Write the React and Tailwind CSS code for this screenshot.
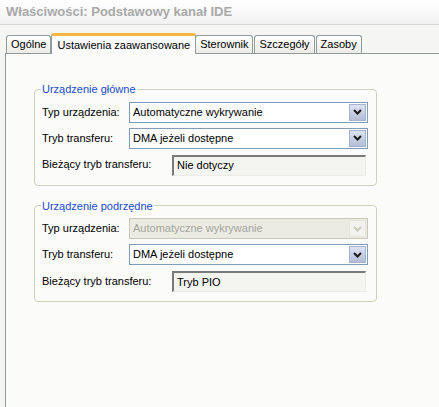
import React from 'react';

const font = { fontFamily: '"Liberation Sans", Arial, sans-serif' };

function Chevron({ disabled }) {
  return (
    <svg width="9" height="6" viewBox="0 0 9 6">
      <path
        d="M1 1 L4.5 4.5 L8 1"
        fill="none"
        stroke={disabled ? '#c9c9c0' : '#1a1a1a'}
        strokeWidth="2"
      />
    </svg>
  );
}

function Select({ value, disabled }) {
  return (
    <div
      className={
        'flex items-center h-[21px] w-[239px] shrink-0 border ' +
        (disabled ? 'border-[#c9c7ba] bg-[#ebebe4] text-[#a5a59d]' : 'border-[#7f9db9] bg-white text-black')
      }
    >
      <span className="flex-1 pl-[3px] leading-none">{value}</span>
      <div
        className={
          'w-[17px] h-[17px] mr-[1px] flex items-center justify-center border ' +
          (disabled
            ? 'border-[#e4e4dc] bg-[#f2f2ee]'
            : 'border-[#a6b3cf] bg-gradient-to-b from-[#dde3f2] to-[#b4bdd6]')
        }
      >
        <Chevron disabled={disabled} />
      </div>
    </div>
  );
}

function ReadOnly({ value }) {
  return (
    <div className="flex items-center h-[21px] w-[194px] mr-[2px] mt-[1px] shrink-0 border-t-2 border-l-2 border-t-[#7a7a7a] border-l-[#7a7a7a] border-r border-b border-r-[#ececec] border-b-[#ececec] bg-[#f4f4f1] pl-[3px] text-black">
      {value}
    </div>
  );
}

function Row({ label, children }) {
  return (
    <div className="flex items-center justify-between">
      <span className="text-black whitespace-nowrap">{label}</span>
      {children}
    </div>
  );
}

function Group({ title, rows }) {
  return (
    <fieldset className="w-[343px] border border-[#d0d0bf] rounded-[4px] pl-[7px] pr-[8px] pt-[4px] pb-[9px] m-0">
      <legend className="text-[#1a4bc8] px-[1px] ml-[-1px]">{title}</legend>
      <div className="flex flex-col gap-[5px]">{rows}</div>
    </fieldset>
  );
}

export default function App() {
  const tabs = ['Ogólne', 'Ustawienia zaawansowane', 'Sterownik', 'Szczegóły', 'Zasoby'];
  return (
    <div className="w-[439px] h-[407px] overflow-hidden flex flex-col bg-[#f6f6f4] text-[11px]" style={font}>
      <div className="h-[25px] shrink-0 flex items-center pl-[6px] bg-gradient-to-b from-white to-[#f1f1f1] border-b border-[#d6d6d6]">
        <span className="font-bold text-[13px] text-[#a9a9a9]">Właściwości: Podstawowy kanał IDE</span>
      </div>
      <div className="flex-1 flex flex-col bg-[#f5f5f3]">
        <div className="h-[28px] shrink-0 flex items-end pl-[6px]">
          {tabs.map((t, i) =>
            i === 1 ? (
              <div
                key={t}
                className="h-[21px] mb-[-1px] relative z-10 flex items-center px-[5px] bg-[#fcfcfe] border-x border-[#919b9c] border-t-[3px] border-t-[#f5b942] rounded-t-[3px] mx-[-1px]"
              >
                {t}
              </div>
            ) : (
              <div
                key={t}
                className="h-[18px] flex items-center px-[4px] mr-[1px] border border-b-0 border-[#919b9c] rounded-t-[3px] bg-gradient-to-b from-white to-[#ecebe6]"
              >
                {t}
              </div>
            )
          )}
        </div>
        <div className="flex-1 ml-[5px] border-l border-t border-[#919b9c] bg-[#fbfbf9] pl-[28px] pt-[27px] flex flex-col gap-[12px]">
          <Group
            title="Urządzenie główne"
            rows={[
              <Row key="a" label="Typ urządzenia:">
                <Select value="Automatyczne wykrywanie" />
              </Row>,
              <Row key="b" label="Tryb transferu:">
                <Select value="DMA jeżeli dostępne" />
              </Row>,
              <Row key="c" label="Bieżący tryb transferu:">
                <ReadOnly value="Nie dotyczy" />
              </Row>,
            ]}
          />
          <Group
            title="Urządzenie podrzędne"
            rows={[
              <Row key="a" label="Typ urządzenia:">
                <Select value="Automatyczne wykrywanie" disabled />
              </Row>,
              <Row key="b" label="Tryb transferu:">
                <Select value="DMA jeżeli dostępne" />
              </Row>,
              <Row key="c" label="Bieżący tryb transferu:">
                <ReadOnly value="Tryb PIO" />
              </Row>,
            ]}
          />
        </div>
      </div>
    </div>
  );
}
